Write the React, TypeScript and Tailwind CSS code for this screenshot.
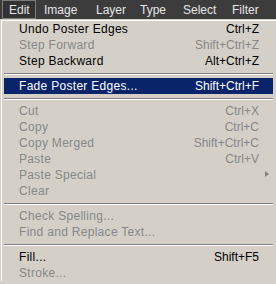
import React from 'react';

type Item =
  | { kind: 'sep' }
  | { kind: 'item'; label: string; shortcut?: string; disabled?: boolean; active?: boolean; submenu?: boolean };

const items: Item[] = [
  { kind: 'item', label: 'Undo Poster Edges', shortcut: 'Ctrl+Z' },
  { kind: 'item', label: 'Step Forward', shortcut: 'Shift+Ctrl+Z', disabled: true },
  { kind: 'item', label: 'Step Backward', shortcut: 'Alt+Ctrl+Z' },
  { kind: 'sep' },
  { kind: 'item', label: 'Fade Poster Edges...', shortcut: 'Shift+Ctrl+F', active: true },
  { kind: 'sep' },
  { kind: 'item', label: 'Cut', shortcut: 'Ctrl+X', disabled: true },
  { kind: 'item', label: 'Copy', shortcut: 'Ctrl+C', disabled: true },
  { kind: 'item', label: 'Copy Merged', shortcut: 'Shift+Ctrl+C', disabled: true },
  { kind: 'item', label: 'Paste', shortcut: 'Ctrl+V', disabled: true },
  { kind: 'item', label: 'Paste Special', disabled: true, submenu: true },
  { kind: 'item', label: 'Clear', disabled: true },
  { kind: 'sep' },
  { kind: 'item', label: 'Check Spelling...', disabled: true },
  { kind: 'item', label: 'Find and Replace Text...', disabled: true },
  { kind: 'sep' },
  { kind: 'item', label: 'Fill...', shortcut: 'Shift+F5' },
  { kind: 'item', label: 'Stroke...', disabled: true },
];

function MenuBar() {
  return (
    <div className="flex h-[19px] items-stretch bg-[#3c3c3c] text-[12px] text-[#e6e6e6]">
      <div className="ml-[2px] flex w-[34px] items-center border border-[#7c7c7c] bg-[#333333] pl-[6px]">Edit</div>
      <div className="flex w-[52px] items-center pl-[8px]">Image</div>
      <div className="flex w-[44px] items-center pl-[8px]">Layer</div>
      <div className="flex w-[43px] items-center pl-[8px]">Type</div>
      <div className="flex w-[49px] items-center pl-[8px]">Select</div>
      <div className="flex items-center pl-[8px]">Filter</div>
    </div>
  );
}

export default function App() {
  return (
    <div className="h-[284px] w-[276px] overflow-hidden bg-[#d4d0c8] font-['Liberation_Sans',Arial,sans-serif] text-[12px]">
      <MenuBar />
      <div className="pl-[1px] pt-[1px]">
        <div className="border-l border-t border-white pl-[2px] pr-[3px]">
          {items.map((item, i) =>
            item.kind === 'sep' ? (
              <div key={i} className="flex h-[9px] items-center">
                <div className="w-full border-t border-b border-t-[#808080] border-b-white" />
              </div>
            ) : (
              <div
                key={i}
                className={
                  'relative flex h-[16px] items-center pl-[15px] pr-[14px] ' +
                  (item.active ? 'bg-[#0a246a] text-white' : item.disabled ? 'text-[#878787]' : 'text-black')
                }
              >
                <span className="flex-1 whitespace-nowrap tracking-[0.3px]">{item.label}</span>
                {item.shortcut && <span className="whitespace-nowrap">{item.shortcut}</span>}
                {item.submenu && (
                  <span className="absolute right-[4px] top-[4px] h-0 w-0 border-y-[3.5px] border-l-[4px] border-y-transparent border-l-[#808080]" />
                )}
              </div>
            ),
          )}
        </div>
      </div>
    </div>
  );
}
